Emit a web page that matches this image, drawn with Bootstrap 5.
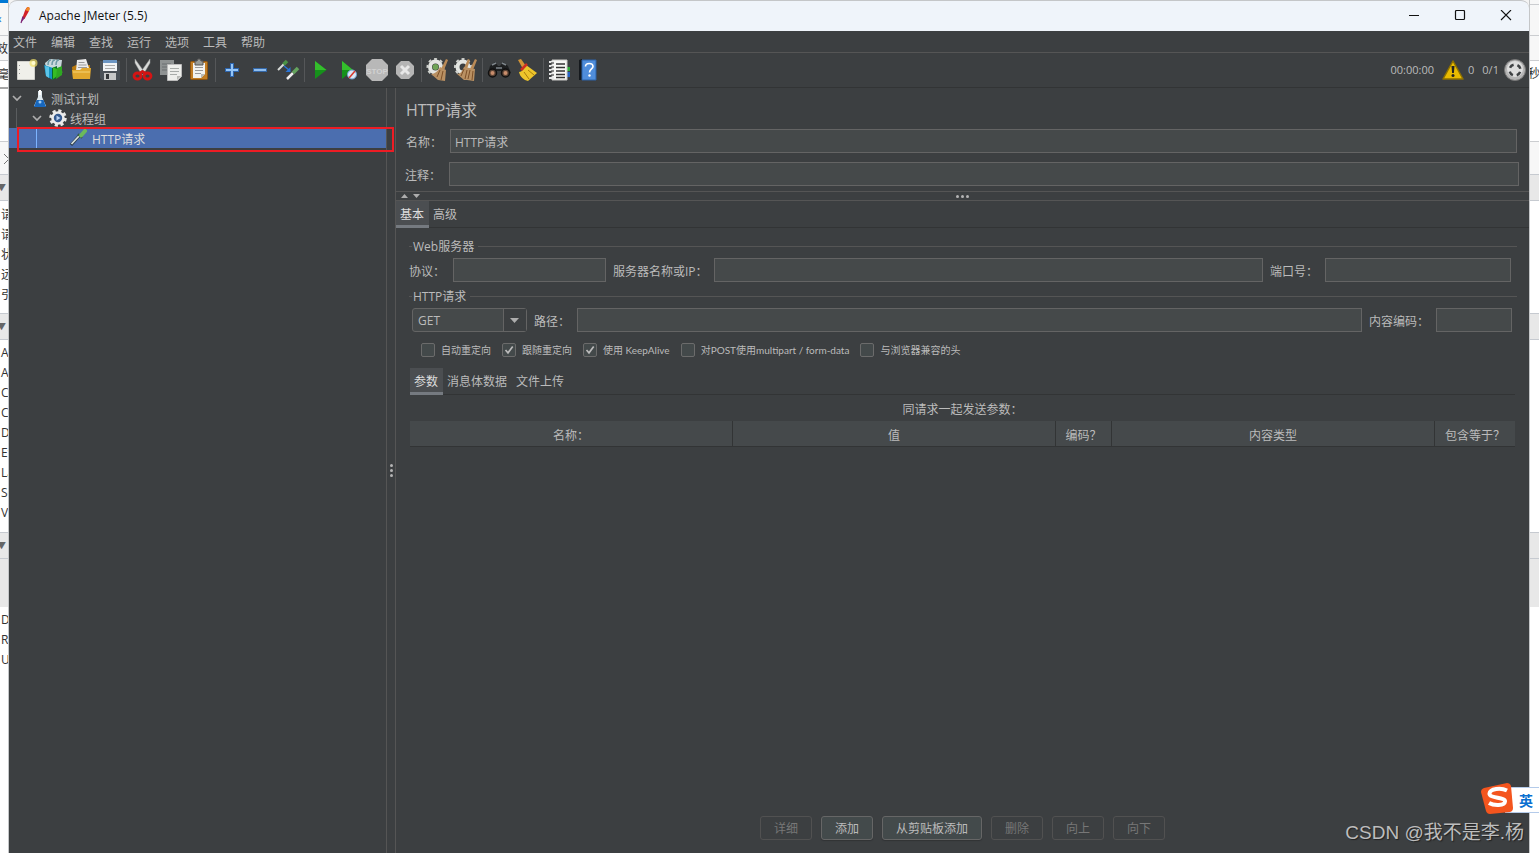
<!DOCTYPE html>
<html lang="zh-CN">
<head>
<meta charset="utf-8">
<meta name="viewport" content="width=device-width, initial-scale=1">
<title>Apache JMeter (5.5)</title>
<link href="https://cdn.jsdelivr.net/npm/bootstrap@5.3.0/dist/css/bootstrap.min.css" rel="stylesheet">
<style>
  :root { --pane:#3c3f41; --field:#45494a; --edge:#646464; --rule:#555555; --dark:#323435; --ink:#bbbbbb; }
  body { font-family:"Open Sans","Noto Sans CJK SC",sans-serif; font-size:12px; line-height:16px; background:#fff; color:var(--ink); overflow:hidden; }
  svg { display:block; flex:none; }
  /* page visible behind the window */
  .behind { overflow:hidden; white-space:nowrap; color:#333; flex:none; }
  .behind div { overflow:hidden; }
  .behind-l { width:9px; border-right:1px solid #c4c6c8; }
  .behind-r { width:10px; border-left:1px solid #c4c6c8; }
  .b-soft { background:#f7f7f7; border-bottom:1px solid #cbcdd0; }
  .b-head { height:27px; background:#e8e8e8; border:solid #c6cad0; border-width:1px 0; font-size:9px; line-height:25px; color:#666; text-indent:-3px; }
  .b-line { height:20px; line-height:22px; padding-left:1px; }
  .b-fill { background:#e8e8e8; height:48px; }
  /* window */
  .app { background:var(--pane); min-width:0; }
  .corner { background:#f4f4f4; }
  .titlebar { height:31px; background:#eff4fa; color:#111; border-top:1px solid #c4c6c8; border-radius:8px 8px 0 0; padding-left:6px; }
  .titlebar button, .tool { background:none; border:0; padding:0; color:inherit; }
  .titlebar button { width:46px; height:30px; display:flex; align-items:center; justify-content:center; }
  .menus { height:22px; border-bottom:1px solid var(--rule); padding:2px 0 0 4px; gap:14px; }
  .menus a { color:var(--ink); text-decoration:none; }
  .tools { height:35px; border-bottom:1px solid var(--dark); padding:0 2px 0 3px; }
  .tool { width:28px; height:34px; display:flex; align-items:center; justify-content:center; }
  .status { font-size:11px; gap:8px; }
  .sep { width:1px; height:24px; background:#555759; margin:0 2px; }
  .treepane { width:378px; border-right:1px solid var(--rule); flex:none; }
  .node { height:20px; gap:4px; position:relative; }
  .node span { padding-top:3px; }
  .lvl1 { padding-left:2px; } .lvl2 { padding-left:22px; } .lvl3 { padding-left:60px; }
  .lvl1 svg + svg { margin:0 2px 0 5px; }
  .lvl2 svg + svg { margin-left:3px; }
  .lvl2 { gap:3px; }
  .guide::before { content:""; position:absolute; left:7px; top:0; height:20px; width:1px; background:#5a5d5f; }
  .chosen { background:#4b6eaf; color:#ddd; }
  .chosen::before { content:""; position:absolute; left:27px; top:0; height:20px; width:1px; background:#7db4ff; }
  .redbox { position:absolute; left:8px; right:-8px; top:-1px; height:25px; border:2px solid #ed1c24; z-index:2; }
  .grip { width:9px; border-right:1px solid var(--rule); flex:none; }
  .dots i { width:3px; height:3px; border-radius:50%; background:#b4b4b4; display:block; }
  .dots { gap:2px; }
  .panel { min-width:0; }
  .panel h1 { font-size:16px; line-height:24px; margin:0; padding:10px 0 7px 10px; font-weight:400; }
  .inp, .pick { height:24px; background:var(--field); border:1px solid var(--edge); border-radius:0; color:var(--ink); padding:2px 4px 0; font-size:12px; line-height:20px; min-width:0; outline:0; }
  .inp:focus, .pick:focus { border-color:#466d94; }
  .formrow { height:24px; }
  .formrow label { flex:none; white-space:nowrap; padding-top:3px; }
  .hsplit { height:10px; border:solid var(--rule); border-width:1px 0; padding:0 5px; position:relative; }
  .hsplit .dots { position:absolute; left:50%; top:3px; margin-left:-6px; }
  .tabs { height:27px; border-bottom:1px solid var(--dark); }
  .tabs button { height:27px; padding:4px 5px 0 4px; background:none; border:0; border-bottom:3px solid transparent; color:var(--ink); font-size:12px; line-height:16px; flex:none; }
  .tabs button.on { background:#4b4e51; border-bottom-color:#757a80; color:#ddd; }
  .group { border:0; margin:0; padding:0; min-width:0; }
  .cap { height:16px; gap:4px; font-size:12px; line-height:18px; margin:0; display:flex; align-items:center; }
  .cap::before { content:""; width:3px; height:1px; background:var(--rule); margin-right:-3px; }
  .cap::after { content:""; flex:1; height:1px; background:var(--rule); }
  .cap span { padding-top:2px; }
  .combo { width:115px; position:relative; flex:none; }
  .pick { width:100%; appearance:none; border-radius:3px; padding-left:5px; }
  .combo svg { position:absolute; right:1px; top:1px; pointer-events:none; }
  .checks { height:14px; font-size:10px; line-height:15px; gap:11px; margin:11px 0 0 12px; font-family:Lato,"Noto Sans CJK SC",sans-serif; }
  .tick { width:14px; height:14px; appearance:none; background:#43494a; border:1px solid #6b6b6b; border-radius:2px; margin:0 6px 0 0; flex:none; }
  .tick:checked { background-image:url("data:image/svg+xml,%3Csvg xmlns='http://www.w3.org/2000/svg' viewBox='0 0 12 12'%3E%3Cpath d='M2.5 6 5 8.8 9.7 2.5' fill='none' stroke='%23bbbbbb' stroke-width='1.7'/%3E%3C/svg%3E"); }
  .params { width:100%; table-layout:fixed; border-collapse:separate; border-spacing:0; }
  .params th { height:26px; background:#45494b; border-right:1px solid var(--dark); border-bottom:1px solid var(--dark); font-weight:400; text-align:center; padding:4px 0 0; line-height:16px; white-space:nowrap; }
  .params th:last-child { border-right:0; }
  .act { height:24px; width:52px; padding:2px 0 0; font-size:12px; line-height:16px; color:var(--ink); background:#434a4b; border:1px solid #666; border-radius:3px; box-shadow:0 1px 1px #313335; }
  .act.wide { width:100px; }
  .act:disabled { background:none; border-color:#515151; color:#777; box-shadow:none; }
  .wmark { position:absolute; right:15px; bottom:7px; font:19px/26px "Liberation Sans","Noto Sans CJK SC",sans-serif; color:#bdbdbd; text-shadow:1px 1px 1px #222; white-space:nowrap; z-index:3; }
  .ime { position:absolute; right:0; bottom:38px; width:58px; height:32px; z-index:4; }
  .ime span { position:absolute; left:24px; right:0; top:4px; height:26px; background:#fff; border:solid #b4cbea; border-width:1px 0; color:#0a6fd0; font:700 14px/24px "Noto Sans CJK SC",sans-serif; padding-left:14px; }
  .ime svg { position:absolute; left:0; top:0; }
</style>
<script src="https://cdn.jsdelivr.net/npm/bootstrap@5.3.0/dist/js/bootstrap.bundle.min.js"></script>
</head>
<body class="vh-100 d-flex position-relative">

<aside class="behind behind-l" aria-hidden="true">
  <div style="height:3px;background:#0078d4"></div>
  <div class="b-soft" style="height:33px;line-height:32px;color:#0a6fd0;text-indent:-2px">‹</div>
  <div class="b-soft" style="height:25px;line-height:26px;text-indent:-4px">效</div>
  <div style="height:28px;line-height:27px;text-indent:-2px;border-bottom:2px solid #a6a6a6">毫</div>
  <div style="height:53px;border-bottom:1px solid #cbcdd0"></div>
  <div style="height:32px;padding-top:11px;background:#f7f7f7"><svg width="16" height="12"><path d="M4 1l10 10M14 1L4 11" stroke="#777"/></svg></div>
  <div class="b-head">▼</div>
  <div style="height:112px;padding-top:3px"><div class="b-line">请</div><div class="b-line">请</div><div class="b-line">状</div><div class="b-line">远</div><div class="b-line">引</div></div>
  <div class="b-head">▼</div>
  <div style="height:192px;padding-top:2px"><div class="b-line">A</div><div class="b-line">A</div><div class="b-line">C</div><div class="b-line">C</div><div class="b-line">D</div><div class="b-line">Et</div><div class="b-line">La</div><div class="b-line">Se</div><div class="b-line">Va</div></div>
  <div class="b-head">▼</div>
  <div class="b-fill"></div>
  <div style="padding-top:2px"><div class="b-line">D</div><div class="b-line">R</div><div class="b-line">U</div></div>
</aside>

<div class="app flex-grow-1 d-flex flex-column position-relative">
  <header>
    <div class="corner">
    <div class="titlebar d-flex align-items-center">
      <svg width="18" height="20" viewBox="0 0 18 20"><path d="M13.500 1c1.600.5 1.200 2.800-.2 5.200L9.500 13l-2.200-1L10 4.500c1-2.300 2.200-4 3.500-3.500z" fill="#d22128"/><path d="M13.500 1c1.600.5 1.300 2.300.2 4.300L10.500 4.300C11.300 2.300 12.300.7 13.500 1z" fill="#f08a24"/><path d="M8 10.500l-2 6.500M9.500 11.500l-3 4" stroke="#7c2273" stroke-width="1.200"/></svg>
      <span style="padding-left:6px">Apache JMeter (5.5)</span>
      <div class="d-flex ms-auto">
        <button aria-label="最小化"><svg width="12" height="12"><path d="M1 5.500h10" stroke="#111"/></svg></button>
        <button aria-label="最大化"><svg width="12" height="12"><rect x="1.500" y=".5" width="9" height="9" rx="1" fill="none" stroke="#111" stroke-width="1.200"/></svg></button>
        <button aria-label="关闭"><svg width="12" height="12"><path d="M1 0l10 10M11 0L1 10" stroke="#111" stroke-width="1.100"/></svg></button>
      </div>
    </div>
    </div>
    <nav class="menus d-flex align-items-center">
      <a href="#">文件</a><a href="#">编辑</a><a href="#">查找</a><a href="#">运行</a><a href="#">选项</a><a href="#">工具</a><a href="#">帮助</a>
    </nav>
    <div class="tools d-flex align-items-center">
      <button class="tool" aria-label="新建"><svg width="24" height="24"><path d="M3.500 3.500h17v18h-17z" fill="#f0f0ea" stroke="#cfcfca"/><path d="M5.500 7v12" stroke="#999" stroke-dasharray="1 3"/><circle cx="19.500" cy="5" r="4" fill="#f4e36a" opacity=".7"/><circle cx="19.500" cy="5" r="2" fill="#fffbd0"/></svg></button>
      <button class="tool" aria-label="模板"><svg width="24" height="24"><path d="M3 5l5-4 12 1-1 8H4z" fill="#c9d8dc"/><path d="M6 7c0-3 1-5 3-5M10 7c0-3 1-5 3-5M14 7c0-3 1-5 3-5" fill="none" stroke="#6e99a5" stroke-width="1.500"/><path d="M2 7l9 3v12l-7-4z" fill="#1594c4"/><path d="M3 8l4 1v11l-3-2z" fill="#5cc4e8"/><path d="M10 10l5-2v12l-5 2z" fill="#0b6d2c"/><path d="M11 9l10 5-10 7z" fill="#35bd25"/><path d="M15 10l5-2v9l-6 4z" fill="#2ea822"/></svg></button>
      <button class="tool" aria-label="打开"><svg width="24" height="24"><path d="M2 9l4-2h14v14H3z" fill="#b97a10"/><path d="M7 2l9-1 4 12H6z" fill="#ececec"/><path d="M8.500 4.500h6M8.500 7h8M8 9.500h9" stroke="#999"/><path d="M2 12h8l2-2h9l-1 11H3z" fill="#e2a82e"/><path d="M3 14h17" stroke="#f5d374"/></svg></button>
      <button class="tool" aria-label="保存"><svg width="24" height="24"><path d="M2 3h20v19H4l-2-2z" fill="#4a5158"/><path d="M5 2h14v11H5z" fill="#f1f3f5"/><path d="M5 2h14v3H5z" fill="#6b95c3"/><path d="M7 7.500h10M7 10.500h10" stroke="#aaa"/><path d="M6 15h12v7H6z" fill="#c7c9ca"/><path d="M8 16h3v5H8z" fill="#34383c"/></svg></button>
      <span class="sep"></span>
      <button class="tool" aria-label="剪切"><svg width="24" height="24"><path d="M4 1l10 14-3 2L4 5zM19 1L9 15l3 2 7-12z" fill="#d9dbd9" stroke="#9b9d9c" stroke-width=".5"/><g fill="none" stroke="#d41414" stroke-width="2.800"><ellipse cx="6.500" cy="18" rx="3.500" ry="3"/><ellipse cx="16.500" cy="18" rx="3.500" ry="3"/><path d="M8 15.500l3.500-2 3.500 2"/></g></svg></button>
      <button class="tool" aria-label="复制"><svg width="24" height="24"><path d="M1 2h14v15H1z" fill="#8e9292"/><path d="M3 6h9M3 9h9M3 12h9" stroke="#6b6f70"/><path d="M8.500 6.500h14v12l-4 4h-10z" fill="#edeeeb" stroke="#bbb"/><path d="M11 10.500h9M11 13.500h9M11 16.500h7" stroke="#a7aba8"/><path d="M18 22v-4h4z" fill="#b8bab6"/></svg></button>
      <button class="tool" aria-label="粘贴"><svg width="24" height="24"><rect x="3.500" y="3.500" width="17" height="18" rx="1" fill="#c17d24" stroke="#8e540e"/><path d="M6 5h12v11l-4 4H6z" fill="#f2f2ef"/><path d="M8 9.500h8M8 12.500h8M8 15.500h6" stroke="#999"/><path d="M8 3h2l1-2h2l1 2h2v4H8z" fill="#999b96" stroke="#555"/><path d="M14 20v-4h4z" fill="#b8bab6"/></svg></button>
      <span class="sep"></span>
      <button class="tool" aria-label="展开"><svg width="24" height="24"><path d="M12 5v14M5 12h14" stroke="#2e65ad" stroke-width="4"/><path d="M12 6v12M6 12h12" stroke="#94c5f7" stroke-width="2"/></svg></button>
      <button class="tool" aria-label="折叠"><svg width="24" height="24"><path d="M5 12h14" stroke="#3468a8" stroke-width="4"/><path d="M6 12h12" stroke="#8fbdee" stroke-width="2"/></svg></button>
      <button class="tool" aria-label="切换"><svg width="24" height="24"><path d="M2 12l6-6" stroke="#d8dcd8" stroke-width="2"/><path d="M7.500 6.500L11 3" stroke="#4b9145" stroke-width="3.500"/><path d="M11 21l6-6" stroke="#eee" stroke-width="2.500"/><path d="M17 15l5-5" stroke="#65a35e" stroke-width="3.500"/><path d="M8 8l5 4" stroke="#2874d8" stroke-width="1.500"/><path d="M14.500 9v5h-5z" fill="#2874d8"/></svg></button>
      <span class="sep"></span>
      <button class="tool" aria-label="启动"><svg width="24" height="24"><path d="M6 3l11.500 9L6 21z" fill="#16911b"/><path d="M6 3l11.500 9H6z" fill="#34be2c"/></svg></button>
      <button class="tool" aria-label="不停顿开始"><svg width="24" height="24"><path d="M5 3l11 9-11 9z" fill="#16911b"/><path d="M5 3l11 9H5z" fill="#34be2c"/><circle cx="15" cy="16.500" r="4.500" fill="#d9e8f6" stroke="#6f9ed0"/><path d="M12 20l6-7" stroke="#d73a2f" stroke-width="1.600"/></svg></button>
      <button class="tool" aria-label="停止"><svg width="24" height="24"><path d="M7 1h10l6 6v10l-6 6H7l-6-6V7z" fill="#b8b8b8"/><text x="12" y="15.500" text-anchor="middle" font-family="Liberation Sans" font-size="8" font-weight="700" fill="#d2d2d2">STOP</text></svg></button>
      <button class="tool" aria-label="关闭线程"><svg width="24" height="24"><path d="M8 3h8l5 5v8l-5 5H8l-5-5V8z" fill="#b5b5b5"/><path d="M8 8l8 8M16 8l-8 8" stroke="#e8e8e8" stroke-width="3"/></svg></button>
      <span class="sep"></span>
      <button class="tool" aria-label="清除"><svg width="24" height="24"><circle cx="9.500" cy="9" r="5.500" fill="none" stroke="#e4e6e2" stroke-width="4"/><circle cx="9.500" cy="9" r="8" fill="none" stroke="#d0d2ce" stroke-width="2" stroke-dasharray="3 3"/><circle cx="9.500" cy="9" r="3" fill="#6fa456"/><path d="M20 1l2 1-4 10-3-1z" fill="#b98a56"/><path d="M14 9l6 3-1 11-7-1-7-6c4 0 7-3 9-7z" fill="#b99062"/><path d="M14 12l-3 7M17 13l-2 9" stroke="#7d5028"/></svg></button>
      <button class="tool" aria-label="清除全部"><svg width="24" height="24"><circle cx="9" cy="9" r="5.500" fill="none" stroke="#e4e6e2" stroke-width="4"/><circle cx="9" cy="9" r="8" fill="none" stroke="#d0d2ce" stroke-width="2" stroke-dasharray="3 3"/><path d="M14 1l2 1-3 9-3-1zM21 1l2 1-4 10-3-1z" fill="#b98a56"/><path d="M10 9l11 2-1 12-7-1-3 0-7-6c4 0 5-3 7-7z" fill="#b99062"/><path d="M10 11l-3 7M13 12l-2 9M16 12l-2 9M19 13l-1 9" stroke="#7d5028"/></svg></button>
      <span class="sep"></span>
      <button class="tool" aria-label="查找"><svg width="24" height="24"><path d="M3 8l5-4 3 4h2l3-4 5 4 3 7-8 3-2-5h-4l-2 5-7-3z" fill="#1d1f20"/><path d="M5 7l4-2M15 5l4 2M9 10h6" stroke="#7e858a" stroke-width="1.500"/><circle cx="5.500" cy="15" r="4" fill="#5b4436" stroke="#111" stroke-width="1.500"/><circle cx="18.500" cy="15" r="4" fill="#5b4436" stroke="#111" stroke-width="1.500"/><circle cx="5.500" cy="15" r="2" fill="#c98d6c"/><circle cx="18.500" cy="15" r="2" fill="#c98d6c"/></svg></button>
      <button class="tool" aria-label="重置查找"><svg width="24" height="24"><path d="M3 2l3-1 5 7-3 3z" fill="#d39335"/><path d="M11 7l11 8-9 8c-4-1-8-4-9-9 3 0 5-3 7-7z" fill="#edc52b"/><path d="M9 14l5 7M13 12l6 5" stroke="#a97d0c"/><path d="M6 12l6-6" stroke="#cf2e21" stroke-width="2.500"/></svg></button>
      <span class="sep"></span>
      <button class="tool" aria-label="函数助手"><svg width="24" height="24"><path d="M18 9h4v4h-4z" fill="#2fae38"/><path d="M18 14h4v5h-4z" fill="#2864c4"/><path d="M4 2h15v20H4z" fill="#f7f7f5" stroke="#c8c8c5"/><path d="M8 6h9M8 9.500h9M8 13h9M8 16.500h9M8 19.500h9" stroke="#333" stroke-width="1.300"/><path d="M1 4h5M1 8h5M1 12h5M1 16h5M1 20h5" stroke="#e8e8e8" stroke-width="2"/><path d="M3 5h3M3 9h3M3 13h3M3 17h3" stroke="#222"/></svg></button>
      <button class="tool" aria-label="帮助"><svg width="24" height="24"><path d="M3 2l3-1v21H3z" fill="#15191d"/><path d="M6 2h14v20H6z" fill="#4f8ddb" stroke="#2c62a8"/><path d="M9.500 8.500c0-4 7.500-4 7.500 0 0 2.500-3.500 2.500-3.500 6" fill="none" stroke="#fff" stroke-width="1.600"/><circle cx="13.500" cy="17.500" r="1.200" fill="#fff"/></svg></button>
      <div class="status ms-auto d-flex align-items-center">
        <span>00:00:00</span>
        <svg width="22" height="22"><path d="M11 2L21 20H1z" fill="#e9bb00" stroke="#8d7000" stroke-width="1.500" stroke-linejoin="round"/><path d="M9.500 7h3l-.6 7h-1.800z" fill="#222"/><circle cx="11" cy="16.500" r="1.500" fill="#222"/></svg>
        <span style="margin-left:-4px">0</span><span>0/1</span>
        <svg style="margin-left:-4px" width="24" height="24"><circle cx="12" cy="12" r="10.500" fill="#b5b5b5" stroke="#777"/><circle cx="12" cy="11" r="8" fill="#dedede"/><circle cx="12" cy="12" r="5.500" fill="none" stroke="#3f4244" stroke-width="2.500" stroke-dasharray="4.600 4" stroke-dashoffset="-2"/></svg>
      </div>
    </div>
  </header>

  <main class="d-flex flex-grow-1">
    <section class="treepane">
      <div class="node lvl1 d-flex align-items-center">
        <svg width="12" height="12"><path d="M2 4l4 4 4-4" fill="none" stroke="#adadad" stroke-width="1.700"/></svg>
        <svg width="16" height="20"><path d="M6 3h4v6l4 9H2l4-9z" fill="#dfe9ef"/><path d="M4.500 12h7l2.500 7H2z" fill="#1767bd"/><path d="M8 2v5" stroke="#fff" stroke-width="2"/><circle cx="8" cy="14" r="1.500" fill="#9ccbf5"/></svg>
        <span style="margin-left:-3px">测试计划</span>
      </div>
      <div class="node lvl2 guide d-flex align-items-center">
        <svg width="12" height="12"><path d="M2 4l4 4 4-4" fill="none" stroke="#adadad" stroke-width="1.700"/></svg>
        <svg width="18" height="18" viewBox="0 0 18 18"><circle cx="9" cy="9" r="7" fill="none" stroke="#e8e8e6" stroke-width="3.500" stroke-dasharray="3 2.500"/><circle cx="9" cy="9" r="5.500" fill="#34598e" stroke="#ececec" stroke-width="2.600"/><path d="M7.500 6.500l4 2.500-4 2.500z" fill="#b8d2f3"/></svg>
        <span>线程组</span>
      </div>
      <div class="node lvl3 chosen d-flex align-items-center">
        <svg width="19" height="18" viewBox="0 0 19 18"><path d="M2 16L10 7" stroke="#2c3b46" stroke-width="3"/><path d="M2.500 15L10 7" stroke="#d7e0dd" stroke-width="1.800"/><path d="M9 5l4 4" stroke="#3c5b47" stroke-width="2"/><path d="M12 6.500L16 2" stroke="#6cba5b" stroke-width="4" stroke-linecap="round"/></svg>
        <span>HTTP请求</span>
        <i class="redbox"></i>
      </div>
    </section>
    <div class="grip d-flex align-items-center justify-content-center"><div class="dots d-flex flex-column"><i></i><i></i><i></i></div></div>

    <section class="panel flex-grow-1 d-flex flex-column">
      <h1>HTTP请求</h1>
      <div class="formrow d-flex align-items-center" style="padding:0 12px 0 10px"><label for="nm" style="width:44px">名称：</label><input id="nm" class="inp flex-grow-1" value="HTTP请求"></div>
      <div class="formrow d-flex align-items-center" style="padding:0 10px 0 9px;margin-top:9px"><label for="cm" style="width:44px">注释：</label><input id="cm" class="inp flex-grow-1"></div>
      <div class="hsplit d-flex align-items-center" style="margin-top:5px">
        <svg width="24" height="6"><path d="M0 5l3.500-4L7 5zM12 1h7l-3.500 4z" fill="#adadad"/></svg>
        <div class="dots d-flex"><i></i><i></i><i></i></div>
      </div>
      <div class="tabs d-flex"><button class="on">基本</button><button>高级</button></div>

      <fieldset class="group" style="margin:10px 12px 0 13px">
        <div class="cap"><span>Web服务器</span></div>
        <div class="formrow d-flex align-items-center mt-1" style="padding-right:6px">
          <label for="pr" style="width:44px">协议：</label><input id="pr" class="inp" style="width:153px">
          <label for="sv" style="width:108px;padding-left:7px">服务器名称或IP：</label><input id="sv" class="inp flex-grow-1">
          <label for="po" style="width:62px;padding-left:7px">端口号：</label><input id="po" class="inp" style="width:186px">
        </div>
      </fieldset>
      <fieldset class="group" style="margin:6px 12px 0 13px">
        <div class="cap"><span>HTTP请求</span></div>
        <div class="formrow d-flex align-items-center mt-1" style="padding:0 5px 0 3px">
          <div class="combo"><select class="pick" aria-label="方法"><option>GET</option></select><svg width="23" height="22"><path d="M1 0h22v22H1z" fill="#3c3f41"/><path d="M.5 0v22" stroke="#646464"/><path d="M7 9h9l-4.500 5z" fill="#adadad"/></svg></div>
          <label for="pa" style="width:50px;padding-left:7px">路径：</label><input id="pa" class="inp flex-grow-1">
          <label for="en" style="width:74px;padding-left:7px">内容编码：</label><input id="en" class="inp" style="width:76px">
        </div>
        <div class="checks d-flex align-items-center">
          <label class="d-flex"><input type="checkbox" class="tick">自动重定向</label>
          <label class="d-flex"><input type="checkbox" class="tick" checked>跟随重定向</label>
          <label class="d-flex"><input type="checkbox" class="tick" checked>使用 KeepAlive</label>
          <label class="d-flex"><input type="checkbox" class="tick">对POST使用multipart / form-data</label>
          <label class="d-flex"><input type="checkbox" class="tick">与浏览器兼容的头</label>
        </div>
      </fieldset>
      <div style="margin:11px 14px 0">
        <div class="tabs d-flex"><button class="on">参数</button><button>消息体数据</button><button>文件上传</button></div>
        <div class="text-center" style="padding:7px 0 3px">同请求一起发送参数：</div>
        <table class="params">
          <colgroup><col><col><col style="width:56px"><col><col style="width:80px"></colgroup>
          <thead><tr><th>名称：</th><th>值</th><th>编码？</th><th>内容类型</th><th>包含等于？</th></tr></thead>
        </table>
      </div>
      <div class="mt-auto d-flex justify-content-center" style="gap:9px;padding-bottom:13px">
        <button class="act" disabled>详细</button><button class="act">添加</button><button class="act wide">从剪贴板添加</button><button class="act" disabled>删除</button><button class="act" disabled>向上</button><button class="act" disabled>向下</button>
      </div>
    </section>
  </main>
</div>

<aside class="behind behind-r" aria-hidden="true">
  <div class="b-soft" style="height:5px"></div>
  <div class="b-soft" style="height:31px"></div>
  <div class="b-soft" style="height:25px"></div>
  <div style="height:81px;line-height:25px;text-indent:-2px;border-bottom:1px solid #cbcdd0">秒</div>
  <div style="height:32px;background:#f7f7f7"></div>
  <div class="b-head"></div>
  <div style="height:112px"></div>
  <div class="b-head"></div>
  <div style="height:192px"></div>
  <div class="b-head"></div>
  <div class="b-fill"></div>
</aside>

<div class="wmark">CSDN @我不是李.杨</div>
<div class="ime"><span>英</span><svg width="33" height="32"><path d="M3 5L26 0q3 0 4 3l2 22q0 3-3 4L9 31q-3 0-4-3L0 9q0-3 3-4z" fill="#f4551e"/><path d="M26 7.500c-6-3-17-2-17.500 3-.5 5 16 3.500 15.500 8-.5 4.500-11 4.500-16 1.500" fill="none" stroke="#fff" stroke-width="4"/></svg></div>
</body>
</html>
